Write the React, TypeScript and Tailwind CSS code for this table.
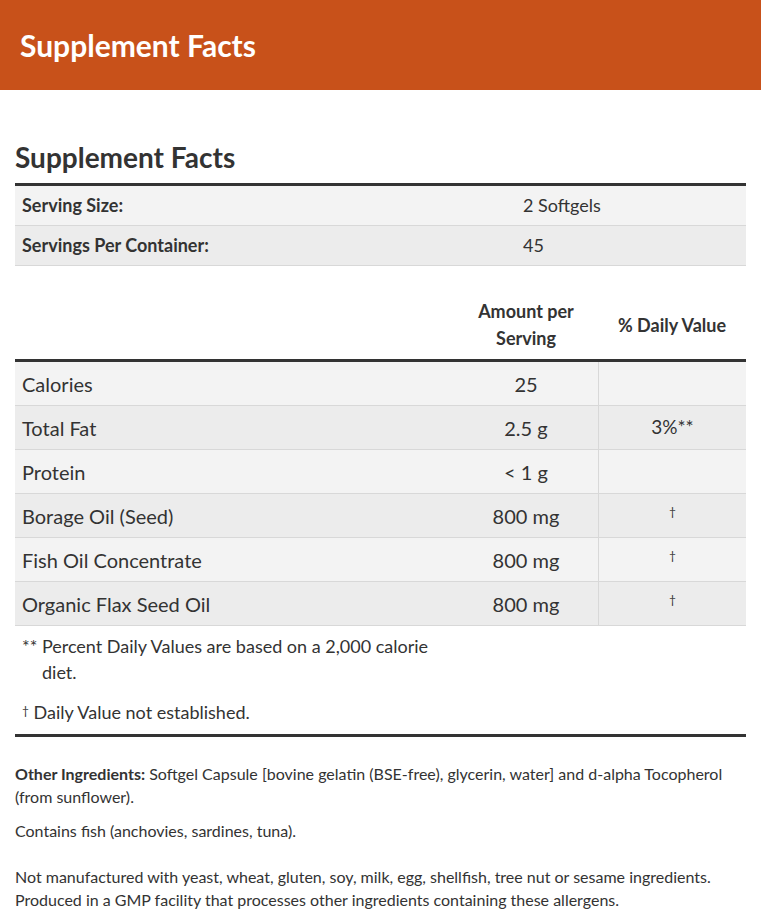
const rows = [
  { name: "Calories", amount: "25", dv: "" },
  { name: "Total Fat", amount: "2.5 g", dv: "3%**" },
  { name: "Protein", amount: "< 1 g", dv: "" },
  { name: "Borage Oil (Seed)", amount: "800 mg", dv: "†" },
  { name: "Fish Oil Concentrate", amount: "800 mg", dv: "†" },
  { name: "Organic Flax Seed Oil", amount: "800 mg", dv: "†" },
];

function Dagger() {
  return <span className="relative -top-[4px] text-[12px]">†</span>;
}

export default function App() {
  return (
    <div className="min-h-screen bg-white text-[#333] font-['Lato','Liberation_Sans',sans-serif]">
      <header className="flex h-[90px] items-center bg-[#c8511a] px-5">
        <h1 className="text-[30px] font-bold text-white">Supplement Facts</h1>
      </header>

      <main className="px-[15px]">
        <h2 className="mt-[53px] text-[28px] leading-[29px] font-bold">Supplement Facts</h2>

        {/* serving info */}
        <div className="mt-[11px] border-t-[3px] border-[#333]">
          <div className="flex h-[40px] items-center border-b border-[#d8d8d8] bg-[#f3f3f3] text-[18px]">
            <div className="w-[508px] pl-[7px] font-bold">Serving Size:</div>
            <div>2 Softgels</div>
          </div>
          <div className="flex h-[40px] items-center border-b border-[#d8d8d8] bg-[#ececec] text-[18px]">
            <div className="w-[508px] pl-[7px] font-bold">Servings Per Container:</div>
            <div>45</div>
          </div>
        </div>

        {/* nutrients */}
        <div className="mt-[32px] flex items-center pb-[7px] text-[18px] leading-[27px] font-bold">
          <div className="w-[439px]" />
          <div className="w-[144px] text-center">
            Amount per
            <br />
            Serving
          </div>
          <div className="flex-1 text-center">% Daily Value</div>
        </div>
        <div className="border-t-[3px] border-[#333]">
          {rows.map((r, i) => (
            <div
              key={r.name}
              className={`flex h-[44px] border-b border-[#d8d8d8] text-[20px] ${i % 2 === 0 ? "bg-[#f3f3f3]" : "bg-[#ececec]"}`}
            >
              <div className="flex w-[439px] items-center pl-[7px]">{r.name}</div>
              <div className="flex w-[144px] items-center justify-center">{r.amount}</div>
              <div className="flex flex-1 items-center justify-center border-l border-[#d8d8d8] text-[19px]">
                {r.dv === "†" ? <Dagger /> : r.dv}
              </div>
            </div>
          ))}
        </div>

        <div className="mt-[7px] pl-[27px] -indent-5 text-[18px] leading-[26px]">
          ** Percent Daily Values are based on a 2,000 calorie
          <br />
          diet.
        </div>
        <div className="mt-[14px] pl-[7px] text-[18px] leading-[26px]">
          <Dagger /> Daily Value not established.
        </div>

        <div className="mt-[6px] border-t-[3px] border-[#333]" />

        <div className="text-[16px] leading-[23px]">
          <p className="mt-[25px]">
            <span className="font-bold">Other Ingredients:</span> Softgel Capsule [bovine gelatin (BSE-free), glycerin, water] and d-alpha Tocopherol
            <br />
            (from sunflower).
          </p>
          <p className="mt-[11px]">Contains fish (anchovies, sardines, tuna).</p>
          <p className="mt-[23px]">
            Not manufactured with yeast, wheat, gluten, soy, milk, egg, shellfish, tree nut or sesame ingredients.
            <br />
            Produced in a GMP facility that processes other ingredients containing these allergens.
          </p>
        </div>
      </main>
    </div>
  );
}
